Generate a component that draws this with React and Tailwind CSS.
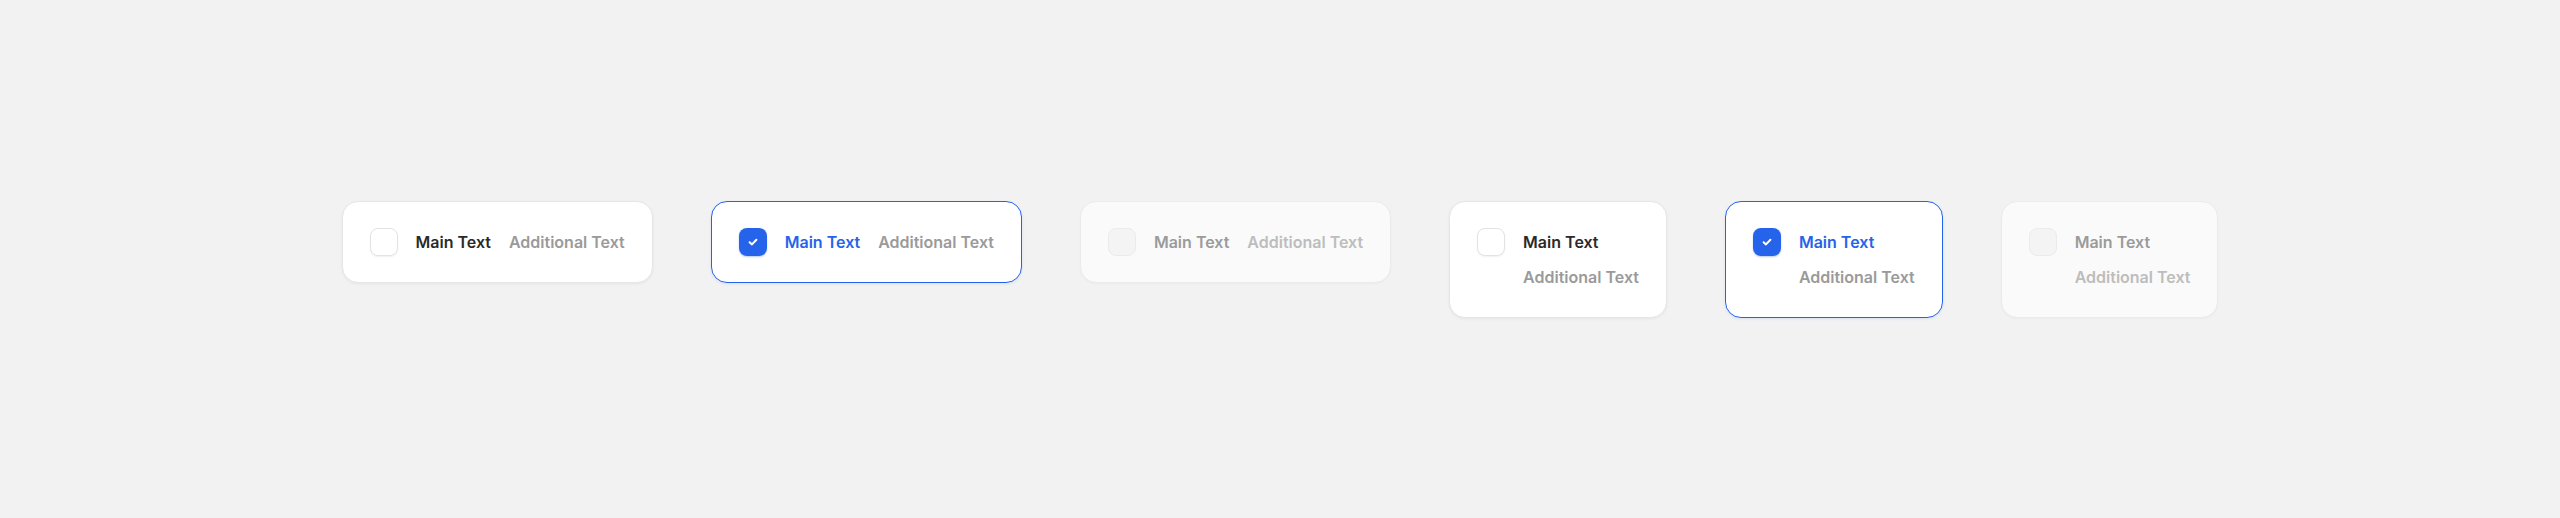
import React from 'react';

const items = [
    { layout: 'row', state: 'default' },
    { layout: 'row', state: 'checked' },
    { layout: 'row', state: 'disabled' },
    { layout: 'col', state: 'default' },
    { layout: 'col', state: 'checked' },
    { layout: 'col', state: 'disabled' },
];

function Box({ state }) {
    if (state === 'checked') {
        return (
            <div className="w-7 h-7 shrink-0 rounded-lg bg-[#2563eb] flex items-center justify-center shadow-[0_1px_2px_rgba(37,99,235,0.35)]">
                <svg width="12" height="12" viewBox="0 0 12 12" fill="none">
                    <path d="M2.6 6.2 L5 8.4 L9.4 3.8" stroke="white" strokeWidth="2" strokeLinecap="round" strokeLinejoin="round" />
                </svg>
            </div>
        );
    }
    if (state === 'disabled') {
        return <div className="w-7 h-7 shrink-0 rounded-lg bg-[#f4f4f4] border border-[#ebebeb]" />;
    }
    return <div className="w-7 h-7 shrink-0 rounded-lg bg-white border border-[#e3e3e3] shadow-[0_1px_2px_rgba(0,0,0,0.06)]" />;
}

function Card({ layout, state }) {
    const cardCls = {
        default: 'bg-white border-[#e6e6e6] shadow-[0_1px_3px_rgba(0,0,0,0.06)]',
        checked: 'bg-white border-[#2563eb] shadow-[0_1px_3px_rgba(37,99,235,0.12)]',
        disabled: 'bg-[#fafafa] border-[#ebebeb] shadow-[0_1px_2px_rgba(0,0,0,0.03)]',
    }[state];
    const mainCls = {
        default: 'text-[#2a2a2a]',
        checked: 'text-[#2563eb]',
        disabled: 'text-[#9b9b9b]',
    }[state];
    const subCls = state === 'disabled' ? 'text-[#bdbdbd]' : 'text-[#9a9a9a]';

    return (
        <div className={`rounded-2xl border py-[26px] px-[27px] flex items-start gap-[18px] ${cardCls}`}>
            <Box state={state} />
            <div className={layout === 'row' ? 'flex items-center gap-[18px]' : 'flex flex-col gap-[7px]'}>
                <span className={`text-base font-semibold leading-7 whitespace-nowrap ${mainCls}`}>Main Text</span>
                <span className={`text-base font-semibold leading-7 whitespace-nowrap ${subCls}`}>Additional Text</span>
            </div>
        </div>
    );
}

export default function App() {
    return (
        <div className="w-full h-[518px] bg-[#f2f2f2] flex items-center justify-center" style={{ fontFamily: 'Inter, "Noto Sans", sans-serif' }}>
            <div className="flex items-start gap-[58px]">
                {items.map((it, i) => (
                    <Card key={i} layout={it.layout} state={it.state} />
                ))}
            </div>
        </div>
    );
}
